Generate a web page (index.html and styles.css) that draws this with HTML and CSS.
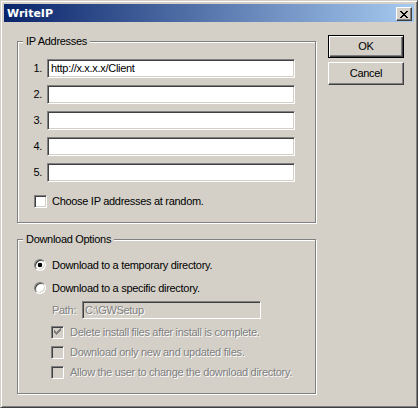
FILE: index.html
```html
<!DOCTYPE html>
<html>
<head>
<meta charset="utf-8">
<link rel="stylesheet" href="styles.css">
</head>
<body>
<div class="window">
  <div class="titlebar">
    <span class="title">WriteIP</span>
    <div class="close">
      <svg width="8" height="7" viewBox="0 0 8 7" shape-rendering="crispEdges"><path fill="#000" d="M0 0h2v1H0zM6 0h2v1H6zM1 1h2v1H1zM5 1h2v1H5zM2 2h4v1H2zM3 3h2v1H3zM2 4h4v1H2zM1 5h2v1H1zM5 5h2v1H5zM0 6h2v1H0zM6 6h2v1H6z"/></svg>
    </div>
  </div>
  <div class="client">
    <div class="groups">
      <div class="group g1">
        <div class="legend">IP Addresses</div>
        <div class="rows">
          <div class="row"><span class="num">1.</span><div class="field">http://x.x.x.x/Client</div></div>
          <div class="row"><span class="num">2.</span><div class="field"></div></div>
          <div class="row"><span class="num">3.</span><div class="field"></div></div>
          <div class="row"><span class="num">4.</span><div class="field"></div></div>
          <div class="row"><span class="num">5.</span><div class="field"></div></div>
        </div>
        <div class="check c-random"><span class="box"></span><span>Choose IP addresses at random.</span></div>
      </div>
      <div class="group g2">
        <div class="legend">Download Options</div>
        <div class="radio r1"><span class="dot on"></span><span>Download to a temporary directory.</span></div>
        <div class="radio r2"><span class="dot"></span><span>Download to a specific directory.</span></div>
        <div class="path"><span class="path-label">Path:</span><div class="field field-dis">C:\GWSetup</div></div>
        <div class="check dis c1"><span class="box"><svg width="9" height="9" viewBox="0 0 9 9" shape-rendering="crispEdges"><path fill="#808080" d="M1 2h1v3H1zM2 3h1v3H2zM3 4h1v3H3zM4 3h1v3H4zM5 2h1v3H5zM6 1h1v3H6zM7 0h1v3H7z"/></svg></span><span class="dis-text">Delete install files after install is complete.</span></div>
        <div class="check dis c2"><span class="box"></span><span class="dis-text">Download only new and updated files.</span></div>
        <div class="check dis c3"><span class="box"></span><span class="dis-text">Allow the user to change the download directory.</span></div>
      </div>
    </div>
    <div class="buttons">
      <div class="btn default">OK</div>
      <div class="btn">Cancel</div>
    </div>
  </div>
</div>
</body>
</html>
```
FILE: styles.css
```css
* { box-sizing: border-box; }
body {
  margin: 0;
  background: #ffffff;
  font-family: "Liberation Sans", Arial, sans-serif;
  font-size: 11px;
  letter-spacing: -0.3px;
  color: #000;
}
.window {
  width: 418px;
  height: 408px;
  background: #D4D0C8;
  border: 1px solid;
  border-color: #D4D0C8 #404040 #404040 #D4D0C8;
  box-shadow: inset 1px 1px #fff, inset -1px -1px #808080;
  padding: 3px;
  display: flex;
  flex-direction: column;
}
.titlebar {
  height: 18px;
  flex: none;
  background: linear-gradient(to right, #0A246A, #A6CAF0);
  display: flex;
  justify-content: space-between;
  align-items: flex-start;
  padding: 0 2px 0 3px;
}
.title {
  color: #fff;
  font-family: "DejaVu Sans", sans-serif;
  font-weight: bold;
  font-size: 11px;
  letter-spacing: 0;
  line-height: 16px;
  padding-top: 2px;
}
.close {
  width: 16px;
  height: 14px;
  margin-top: 3px;
  background: #D4D0C8;
  border: 1px solid;
  border-color: #fff #404040 #404040 #fff;
  box-shadow: inset -1px -1px #808080, inset 1px 1px #D4D0C8;
  display: flex;
  align-items: center;
  justify-content: center;
  padding-top: 1px;
}
.close svg { display: block; }
.client {
  flex: 1;
  display: flex;
  gap: 12px;
  padding: 13px 0 0 13px;
}
.groups {
  width: 299px;
  padding-top: 6px;
  display: flex;
  flex-direction: column;
}
.group {
  border: 1px solid #808080;
  box-shadow: 1px 1px #fff, inset 1px 1px #fff;
  display: flex;
  flex-direction: column;
  align-items: flex-start;
}
.g1 { height: 182px; }
.g2 { height: 155px; margin-top: 16px; }
.legend {
  margin: -7px 0 0 5px;
  padding: 0 3px;
  background: #D4D0C8;
  line-height: 13px;
  height: 13px;
}
.rows {
  margin-top: 11px;
  display: flex;
  flex-direction: column;
  gap: 7px;
}
.row {
  display: flex;
  align-items: center;
  height: 19px;
}
.num {
  width: 29px;
  text-align: right;
  padding-right: 5px;
  line-height: 13px;
}
.field {
  width: 248px;
  height: 19px;
  background: #fff;
  border: 1px solid;
  border-color: #808080 #fff #fff #808080;
  box-shadow: inset 1px 1px #404040, inset -1px -1px #D4D0C8;
  padding: 0 3px;
  line-height: 17px;
  white-space: nowrap;
}
.check {
  display: flex;
  align-items: center;
  height: 13px;
  line-height: 13px;
  white-space: nowrap;
}
.check .box {
  width: 13px;
  height: 13px;
  flex: none;
  background: #fff;
  border: 1px solid;
  border-color: #808080 #fff #fff #808080;
  box-shadow: inset 1px 1px #404040, inset -1px -1px #D4D0C8;
  display: flex;
  align-items: center;
  justify-content: center;
}
.check .box svg { display: block; margin: 0 1px 0 0; }
.c-random { margin: 13px 0 0 16px; gap: 5px; }
.check.dis { margin-left: 33px; gap: 6px; }
.check.dis .box { background: #D4D0C8; }
.c1 { margin-top: 7px; }
.c2, .c3 { margin-top: 7px; }
.dis-text, .field-dis {
  color: #808080;
  text-shadow: 1px 1px #fff;
}
.radio {
  display: flex;
  align-items: center;
  height: 12px;
  line-height: 13px;
  margin-left: 16px;
  gap: 6px;
  white-space: nowrap;
}
.r1 { margin-top: 13px; }
.r2 { margin-top: 11px; }
.dot {
  width: 12px;
  height: 12px;
  flex: none;
  border-radius: 50%;
  background: #fff;
  border: 1px solid;
  border-color: #808080 #fff #fff #808080;
  box-shadow: inset 1px 1px #404040, inset -1px -1px #D4D0C8;
}
.dot.on {
  background: radial-gradient(circle at 50% 50%, #000 0, #000 2px, #fff 2.6px);
}
.path {
  display: flex;
  align-items: center;
  margin: 7px 0 0 34px;
  height: 18px;
}
.path-label {
  width: 30px;
  color: #808080;
  text-shadow: 1px 1px #fff;
  line-height: 13px;
}
.field-dis {
  width: 179px;
  height: 18px;
  background: #D4D0C8;
  line-height: 16px;
  padding-left: 2px;
}
.buttons {
  display: flex;
  flex-direction: column;
  gap: 4px;
}
.btn {
  width: 76px;
  height: 23px;
  display: flex;
  align-items: center;
  justify-content: center;
  border: 1px solid;
  border-color: #fff #404040 #404040 #fff;
  box-shadow: inset -1px -1px #808080, inset 1px 1px #D4D0C8;
  padding-bottom: 1px;
}
.btn.default {
  border-color: #000;
  box-shadow: inset 1px 1px #fff, inset -1px -1px #404040, inset -2px -2px #808080;
}
```
